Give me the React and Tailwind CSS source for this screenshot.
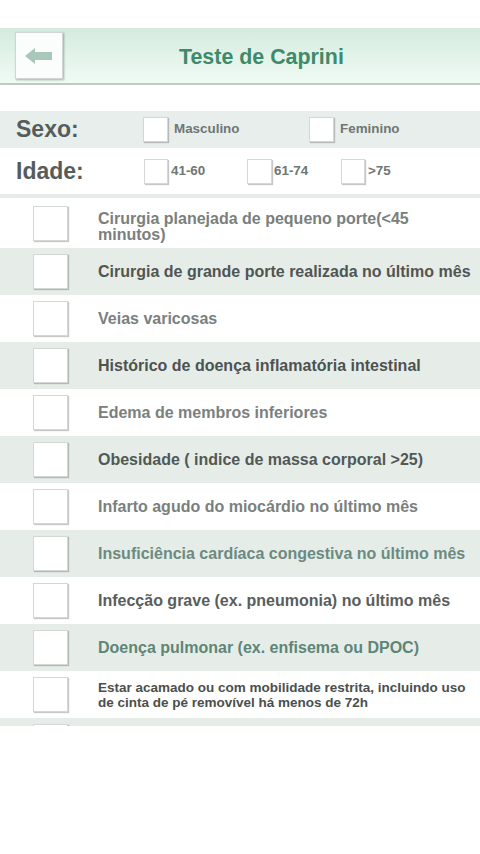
import React from 'react';

const items = [
    { text: ['Cirurgia planejada de pequeno porte(<45', 'minutos)'], color: 'text-[#7a7f7d]', size: 'text-[16px] leading-4 pt-2' },
    { text: 'Cirurgia de grande porte realizada no último mês', color: 'text-[#505553]' },
    { text: 'Veias varicosas', color: 'text-[#7a807e]' },
    { text: 'Histórico de doença inflamatória intestinal', color: 'text-[#4d5250]' },
    { text: 'Edema de membros inferiores', color: 'text-[#7a807e]' },
    { text: 'Obesidade ( indice de massa corporal >25)', color: 'text-[#515856]' },
    { text: 'Infarto agudo do miocárdio no último mês', color: 'text-[#7a807e]' },
    { text: 'Insuficiência cardíaca congestiva no último mês', color: 'text-[#6c8a80]' },
    { text: 'Infecção grave (ex. pneumonia) no último mês', color: 'text-[#595e5c]' },
    { text: 'Doença pulmonar (ex. enfisema ou DPOC)', color: 'text-[#5e8576]' },
    { text: ['Estar acamado ou com mobilidade restrita, incluindo uso', 'de cinta de pé removível há menos de 72h'], color: 'text-[#4a4f4d]', size: 'text-[13.5px] leading-[15px]' },
    { text: '', color: '' },
];

const Box = ({ size = 'w-[35px] h-[35px]' }) => (
    <div className={`${size} shrink-0 bg-white border border-[#d3d8d6] shadow-[1px_1px_1px_rgba(0,0,0,0.22)]`}></div>
);

const App = () => {
    return (
        <div className="w-[480px] h-[854px] bg-white font-['Liberation_Sans',Arial,sans-serif] overflow-hidden">
            <div className="h-7"></div>

            {/* Header */}
            <div className="h-[57px] flex items-center px-[15px] bg-gradient-to-b from-[#d5ebdf] to-[#effbf4] border-b-2 border-[#bfcac5]">
                <button className="w-12 h-[47px] bg-[#fbfdfc] border border-[#d0d6d3] shadow-[1px_1px_2px_rgba(0,0,0,0.3)] flex items-center justify-center">
                    <svg width="28" height="16" viewBox="0 0 28 16">
                        <path d="M0 8 L10 0 L10 4 L27 4 L27 12 L10 12 L10 16 Z" fill="#aac7bb" />
                    </svg>
                </button>
                <h1 className="ml-[116px] pt-1 text-[21.4px] font-bold text-[#3e8a69]">Teste de Caprini</h1>
            </div>

            <div className="h-[26px]"></div>

            {/* Sexo */}
            <div className="h-[37px] bg-[#e8eeeb] flex items-center">
                <span className="pl-4 w-[143px] text-[23px] font-bold text-[#565c5a]">Sexo:</span>
                <Box size="w-[25px] h-[25px]" />
                <span className="ml-[6px] w-[135px] text-[13.4px] font-bold text-[#6f7674]">Masculino</span>
                <Box size="w-[25px] h-[25px]" />
                <span className="ml-[6px] text-[13.4px] font-bold text-[#6f7674]">Feminino</span>
            </div>

            {/* Idade */}
            <div className="h-[46px] flex items-center">
                <span className="pl-4 w-[144px] text-[23px] font-bold text-[#565c5a]">Idade:</span>
                <Box size="w-[24px] h-[25px]" />
                <span className="ml-[3px] w-[76px] text-[13.4px] font-bold text-[#6f7674]">41-60</span>
                <Box size="w-[25px] h-[25px]" />
                <span className="ml-[2px] w-[67px] text-[13.4px] font-bold text-[#6f7674]">61-74</span>
                <Box size="w-[24px] h-[25px]" />
                <span className="ml-[3px] text-[13.4px] font-bold text-[#6f7674]">&gt;75</span>
            </div>

            <div className="h-1 bg-[#e6ebe8]"></div>

            {/* Fatores de risco */}
            <div className="h-[528px] overflow-hidden">
                {items.map((item, i) => (
                    <div
                        key={i}
                        className={`${i === 0 ? 'h-[50px]' : 'h-[47px]'} ${i % 2 === 1 ? 'bg-[#e6ede9]' : 'bg-white'} flex items-center pl-[33px]`}
                    >
                        <Box />
                        <span className={`ml-[30px] font-bold whitespace-nowrap ${item.size || 'text-[16px]'} ${item.color}`}>
                            {Array.isArray(item.text) ? (
                                <>
                                    {item.text[0]}
                                    <br />
                                    {item.text[1]}
                                </>
                            ) : item.text}
                        </span>
                    </div>
                ))}
            </div>
        </div>
    );
};

export default App;
